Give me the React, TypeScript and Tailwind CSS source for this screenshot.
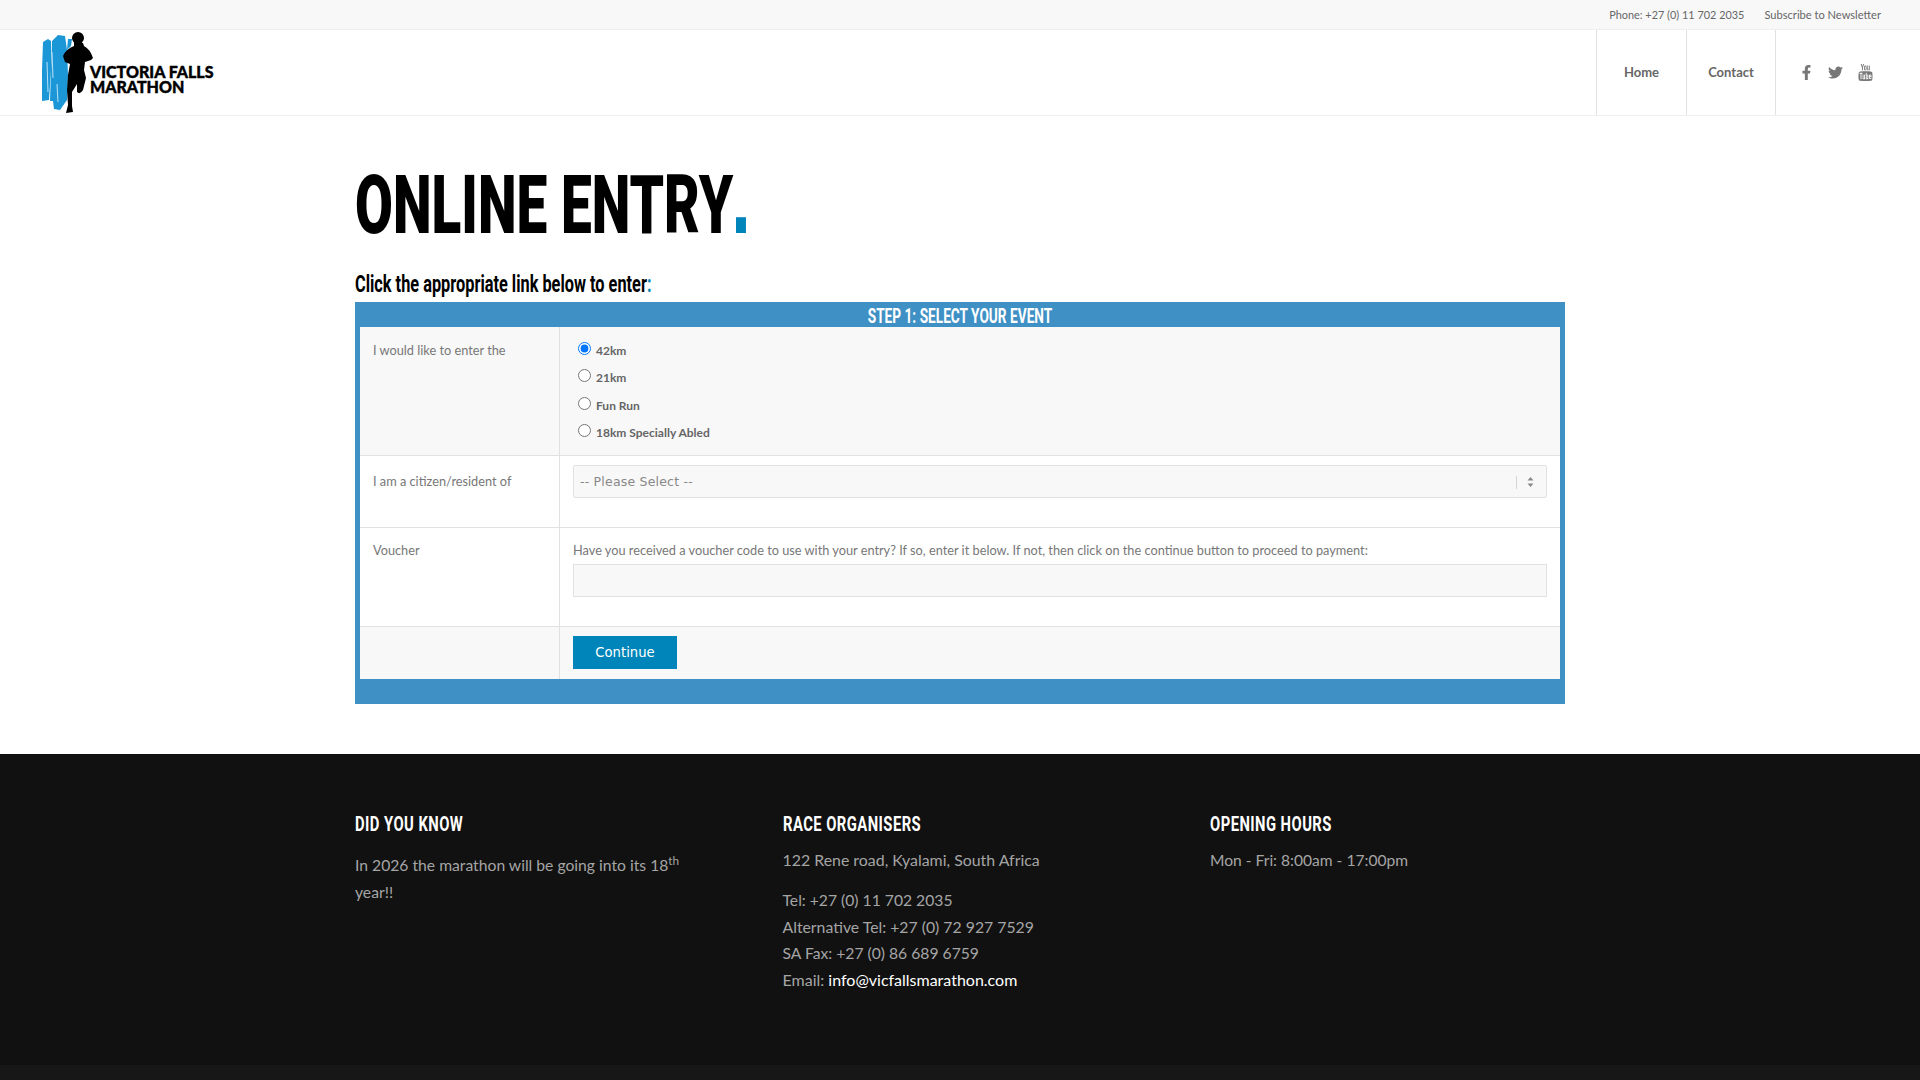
import { FaFacebookF, FaTwitter } from 'react-icons/fa'
import { TfiYoutube } from 'react-icons/tfi'

const heading = "font-['Roboto',sans-serif] whitespace-nowrap"
const footerHeading = `${heading} origin-left scale-x-[.74] text-[20px] font-bold leading-[30px] text-white tracking-[.6px]`
const rowLabel = 'w-[200px] shrink-0 border-r border-[#e1e1e1] pl-[13px] text-[12.75px] text-[#777]'

const events = ['42km', '21km', 'Fun Run', '18km Specially Abled']

const Logo = () => (
  <svg width="175" height="85" viewBox="40 30 175 85" className="ml-[40px]">
    <path d="M43 42 L48 39 L51 41 L51 70 L49 100 L42 101 L42 70 Z" fill="#1b96d6" />
    <path d="M52 41 L58 35 L65 36 L67 50 L68 75 L67 100 L60 110 L54 109 L53 101 L50 101 L51 70 Z" fill="#1b96d6" />
    <path d="M68 39 L72 39 L71 46 L67 50 Z" fill="#1b96d6" />
    <path d="M47 62 L48 92 M52 52 L53 78 M57 84 L58 102" stroke="#bfe3f6" strokeWidth="1" fill="none" />
    <circle cx="78" cy="38" r="6" fill="#000" />
    <path
      d="M74 43 L83 43 L84 46 Q90 49 93 58 L91 60 L85 62 L84 70 L86 78 L83 90 Q80 95 77 92 L77 84 L72 92 L72 106 L73 112 L66 113 L68 105 L67 90 L68 75 L70 64 L65 62 L63 56 Q66 49 74 46 Z"
      fill="#000"
    />
    <text x="90" y="78" fill="#000" stroke="#000" strokeWidth=".4" fontFamily="Lato" fontWeight="900" fontSize="16">VICTORIA FALLS</text>
    <text x="90" y="93" fill="#000" stroke="#000" strokeWidth=".4" fontFamily="Lato" fontWeight="900" fontSize="16">MARATHON</text>
  </svg>
)

const App = () => {
  return (
    <div className="flex min-h-screen flex-col bg-white font-['Lato',sans-serif] text-[13px] text-[#666]">
      <div className="flex h-[29px] items-center justify-end gap-[20px] bg-[#f8f8f8] pr-[39px] pt-px text-[10.9px]">
        <span>Phone: +27 (0) 11 702 2035</span>
        <span className="text-[11.1px]">Subscribe to Newsletter</span>
      </div>

      <header className="flex h-[87px] items-center justify-between border-y border-[#efefef]">
        <Logo />
        <div className="flex h-full items-stretch">
          <a className="flex w-[90px] items-center justify-center border-l border-[#e1e1e1] font-bold">Home</a>
          <a className="flex w-[89px] items-center justify-center border-l border-[#e1e1e1] font-bold">Contact</a>
          <div className="flex w-[145px] items-center gap-[14px] border-l border-[#e1e1e1] pl-[23px] text-[15px] text-[#777]">
            <FaFacebookF />
            <FaTwitter />
            <TfiYoutube className="text-[17px]" />
          </div>
        </div>
      </header>

      <main className="mx-auto w-[1210px] pt-[44px]">
        <h1 className={`${heading} h-[90px] origin-left scale-x-[.67] text-[82px] font-black leading-[90px] text-black`}>
          ONLINE ENTRY
          <span className="-ml-[3px] font-['Liberation_Sans',sans-serif] text-[105px] font-bold leading-[0] text-[#0085ba]">.</span>
        </h1>
        <h2 className={`${heading} mt-[20px] origin-left scale-x-[.71] text-[23px] font-bold leading-[30px] text-black`}>
          Click the appropriate link below to enter<span className="text-[#0085ba]">:</span>
        </h2>

        <div className="mt-[2px] bg-[#3f91c5] px-[5px] pb-[25px]">
          <div className={`${heading} h-[25px] scale-x-[.684] text-center text-[20px] font-bold leading-[29px] text-white`}>
            STEP 1: SELECT YOUR EVENT
          </div>
          <div className="bg-white">
            <div className="flex h-[129px] border-b border-[#e1e1e1] bg-[#f8f8f8]">
              <div className={`${rowLabel} pt-[14px]`}>I would like to enter the</div>
              <div className="flex flex-col gap-[7.3px] pl-[18px] pt-[14px]">
                {events.map((name, i) => (
                  <label key={name} className="flex h-[20px] items-center gap-[5px] text-[12px] font-bold">
                    <input type="radio" name="event" defaultChecked={i === 0} className="-mt-[5px] size-[13px]" />
                    {name}
                  </label>
                ))}
              </div>
            </div>

            <div className="flex h-[72px] border-b border-[#e1e1e1]">
              <div className={`${rowLabel} pt-[16px]`}>I am a citizen/resident of</div>
              <div className="flex-1 pl-[13px] pr-[13px] pt-[9px]">
                <div className="flex h-[33px] items-center justify-between rounded-[2px] border border-[#e1e1e1] bg-[#f8f8f8] pl-[6px] pr-[12px] pt-px font-['DejaVu_Sans',sans-serif] text-[12.5px] tracking-[.2px] text-[#888]">
                  -- Please Select --
                  <span className="flex items-center gap-[10px]">
                    <span className="h-[13px] w-px bg-[#d5d5d5]" />
                    <svg width="7" height="10" viewBox="0 0 7 10" fill="#888">
                      <path d="M3.5 0 L6.5 3.5 H0.5 Z M0.5 6.5 H6.5 L3.5 10 Z" />
                    </svg>
                  </span>
                </div>
              </div>
            </div>

            <div className="flex h-[99px] border-b border-[#e1e1e1]">
              <div className={`${rowLabel} pt-[13px]`}>Voucher</div>
              <div className="flex-1 pl-[13px] pr-[13px] pt-[12px]">
                <p className="text-[12.75px] leading-[20px] text-[#777]">
                  Have you received a voucher code to use with your entry? If so, enter it below. If not, then click on the
                  continue button to proceed to payment:
                </p>
                <div className="mt-[4px] h-[33px] border border-[#e1e1e1] bg-[#f8f8f8]" />
              </div>
            </div>

            <div className="flex h-[52px] bg-[#f8f8f8]">
              <div className={rowLabel} />
              <div className="pl-[13px] pt-[9px]">
                <button className="h-[33px] w-[104px] bg-[#0085ba] font-['DejaVu_Sans',sans-serif] text-[13.2px] text-white">
                  Continue
                </button>
              </div>
            </div>
          </div>
        </div>
      </main>

      <footer className="mt-[50px] flex flex-1 flex-col bg-[#111] text-[16px] leading-[26.5px] text-[#a5a5a5]">
        <div className="mx-auto flex h-[311px] w-[1210px] pt-[55px]">
          <div className="w-[427.5px]">
            <h3 className={footerHeading}>DID YOU KNOW</h3>
            <p className="mt-[13px] w-[340px] text-[15.7px]">
              In 2026 the marathon will be going into its 18<sup>th</sup> year!!
            </p>
          </div>
          <div className="w-[427.5px]">
            <h3 className={footerHeading}>RACE ORGANISERS</h3>
            <p className="mt-[8px] text-[15.9px]">122 Rene road, Kyalami, South Africa</p>
            <p className="mt-[13.5px]">
              <span className="text-[15.7px]">Tel: +27 (0) 11 702 2035</span>
              <br />
              <span className="text-[15.8px]">Alternative Tel: +27 (0) 72 927 7529</span>
              <br />
              <span className="text-[15.7px]">SA Fax: +27 (0) 86 689 6759</span>
              <br />
              Email: <a className="text-white">info@vicfallsmarathon.com</a>
            </p>
          </div>
          <div>
            <h3 className={footerHeading}>OPENING HOURS</h3>
            <p className="mt-[8px] text-[15.6px]">Mon - Fri: 8:00am - 17:00pm</p>
          </div>
        </div>
        <div className="flex-1 bg-[#171717]" />
      </footer>
    </div>
  )
}

export default App
